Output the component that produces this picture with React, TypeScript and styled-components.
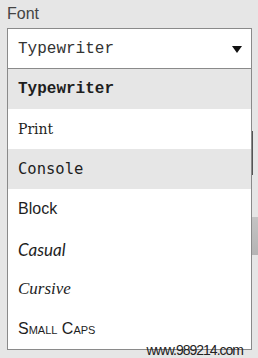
import styled, { createGlobalStyle } from 'styled-components'

const GlobalStyle = createGlobalStyle`
  html, body {
    margin: 0;
    padding: 0;
    background: #e6e6e6;
    overflow: hidden;
  }
  body {
    font-family: 'Liberation Sans', Arial, sans-serif;
  }
`

const Page = styled.div`
  position: relative;
  width: 258px;
  height: 358px;
  padding: 4px 0 0 7px;
  box-sizing: border-box;
`

const Label = styled.div`
  font-size: 16px;
  line-height: 19px;
  color: #444;
  margin-bottom: 5px;
`

const Field = styled.div`
  position: relative;
  width: 245px;
`

const SelectBox = styled.div`
  height: 41px;
  box-sizing: border-box;
  border: 1px solid #8a8a8a;
  border-bottom: none;
  background: #fff;
  display: flex;
  align-items: center;
  justify-content: space-between;
  padding: 0 9px 0 10px;
  font-family: 'Liberation Mono', 'Courier New', monospace;
  font-size: 16px;
  color: #333;
`

const Arrow = styled.svg`
  width: 10px;
  height: 7px;
  margin-top: 1px;
`

const Behind = styled.div`
  display: flex;
  flex-direction: column;
`

const InputBehind = styled.div`
  margin-top: 62px;
  width: 246px;
  height: 44px;
  box-sizing: border-box;
  border: 1px solid #555;
  background: #fff;
`

const ButtonBehind = styled.div`
  margin-top: 42px;
  width: 260px;
  height: 38px;
  background: linear-gradient(#c4c4c4, #b4b4b4);
`

const Menu = styled.ul`
  position: absolute;
  top: 40px;
  left: 0;
  width: 243px;
  margin: 0;
  padding: 0;
  list-style: none;
  background: #fff;
  border: 1px solid #8a8a8a;
`

const Item = styled.li<{ $active?: boolean }>`
  height: 40px;
  display: flex;
  align-items: center;
  padding-left: 10px;
  background: ${p => (p.$active ? '#e6e6e6' : '#fff')};
  color: #1e1e1e;
  font-size: 16px;
`

const Typewriter = styled(Item)`
  font-family: 'Liberation Mono', 'Courier New', monospace;
  font-weight: bold;
`

const Print = styled(Item)`
  font-family: 'DejaVu Serif', Georgia, serif;
  font-size: 14px;
`

const Console = styled(Item)`
  font-family: 'DejaVu Sans Mono', monospace;
  font-size: 15.5px;
`

const Block = styled(Item)`
  font-family: 'Liberation Sans', Arial, sans-serif;
`

const Casual = styled(Item)`
  font-family: Lato, 'DejaVu Sans', sans-serif;
  font-style: italic;
  font-size: 17px;
`

const Cursive = styled(Item)`
  font-family: 'Liberation Serif', 'Times New Roman', serif;
  font-style: italic;
  font-size: 17px;
`

const SmallCaps = styled(Item)`
  font-family: 'Liberation Sans', Arial, sans-serif;
  font-variant: small-caps;
`

const Watermark = styled.div`
  position: absolute;
  right: 15px;
  bottom: 1px;
  font-family: 'Liberation Sans', Arial, sans-serif;
  font-size: 14px;
  letter-spacing: -1px;
  color: #222;
  line-height: 14px;
`

const App = () => {
  return (
    <Page>
      <GlobalStyle />
      <Label>Font</Label>
      <Field>
        <SelectBox>
          <span>Typewriter</span>
          <Arrow viewBox="0 0 10 7">
            <path d="M0 0 H10 L5 7 Z" fill="#111" />
          </Arrow>
        </SelectBox>
        <Behind>
          <InputBehind />
          <ButtonBehind />
        </Behind>
        <Menu>
          <Typewriter $active>Typewriter</Typewriter>
          <Print>Print</Print>
          <Console $active>Console</Console>
          <Block>Block</Block>
          <Casual>Casual</Casual>
          <Cursive>Cursive</Cursive>
          <SmallCaps>Small Caps</SmallCaps>
        </Menu>
      </Field>
      <Watermark>www.989214.com</Watermark>
    </Page>
  )
}

export default App
